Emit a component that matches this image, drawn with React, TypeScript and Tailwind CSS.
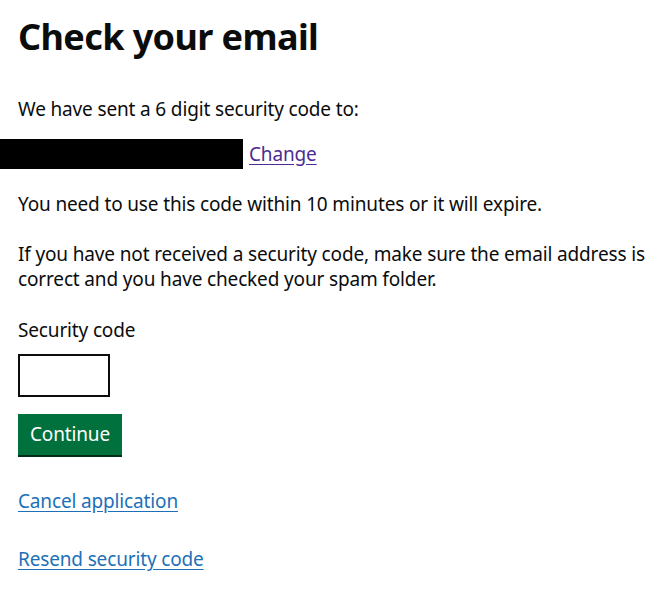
export default function App() {
  const font = { fontFamily: '"Noto Sans", Arial, sans-serif' };
  return (
    <div className="min-h-screen bg-white text-[#0b0c0c]" style={font}>
      <div className="pt-[14px]">
        <h1 className="pl-[18px] text-[36px] font-bold leading-[45px] tracking-[-0.6px]">Check your email</h1>
        <div className="tracking-[-0.15px]">
          <p className="mt-[38px] pl-[18px] text-[19px] leading-[25px]">We have sent a 6 digit security code to:</p>
          <div className="mt-[17px] flex items-center">
            <span className="block h-[30px] w-[243px] bg-black" />
            <a href="#" className="ml-[6px] text-[19px] leading-[25px] text-[#4c2c92] underline underline-offset-[3px]">Change</a>
          </div>
          <p className="mt-[23px] pl-[18px] text-[19px] leading-[25px]">You need to use this code within 10 minutes or it will expire.</p>
          <p className="mt-[25px] pl-[18px] text-[19px] leading-[25px]">If you have not received a security code, make sure the email address is correct and you have checked your spam folder.</p>
          <div className="mt-[26px] pl-[18px]">
            <label className="block text-[19px] leading-[25px]">Security code</label>
            <input className="mt-[11px] block h-[43px] w-[92px] border-2 border-[#0b0c0c] bg-white outline-none" />
            <button className="mt-[17px] block h-[41px] bg-[#00703c] px-[12px] text-[19px] leading-[25px] text-white shadow-[0_2px_0_#002d18]">Continue</button>
            <a href="#" className="mt-[34px] block w-max text-[19px] leading-[25px] text-[#1d70b8] underline underline-offset-[3px]">Cancel application</a>
            <a href="#" className="mt-[33px] block w-max text-[19px] leading-[25px] text-[#1d70b8] underline underline-offset-[3px]">Resend security code</a>
          </div>
        </div>
      </div>
    </div>
  );
}
